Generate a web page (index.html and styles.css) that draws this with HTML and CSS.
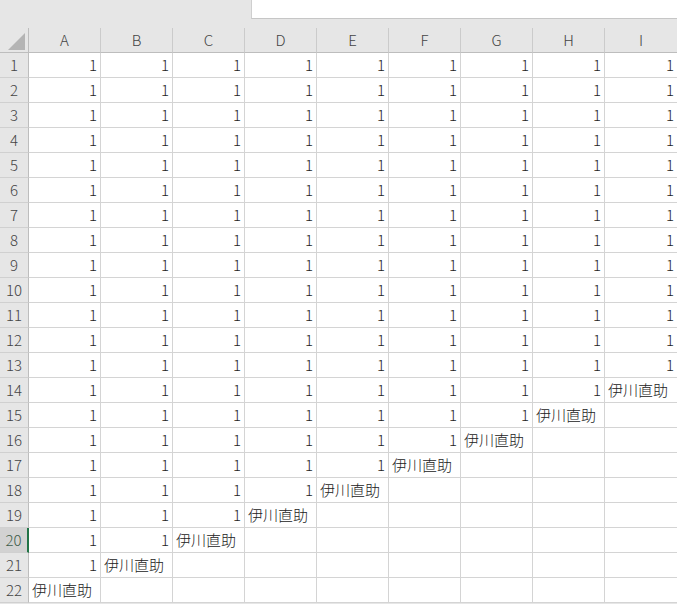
FILE: index.html
```html
<!DOCTYPE html>
<html lang="ja">
<head>
    <meta charset="UTF-8">
    <title>Sheet1</title>
    <link rel="stylesheet" href="styles.css">
</head>
<body>
    <div class="toolbar">
        <div class="formula-box"></div>
    </div>

    <div class="sheet" id="sheet">
        <div class="corner"><span class="corner-mark"></span></div>
        <div class="col-head">A</div>
        <div class="col-head">B</div>
        <div class="col-head">C</div>
        <div class="col-head">D</div>
        <div class="col-head">E</div>
        <div class="col-head">F</div>
        <div class="col-head">G</div>
        <div class="col-head">H</div>
        <div class="col-head">I</div>
    </div>

    <script>
        document.addEventListener('DOMContentLoaded', function() {
            const sheet = document.getElementById('sheet');
            const name = '伊川直助';

            for (let r = 1; r <= 22; r++) {
                const head = document.createElement('div');
                head.className = 'row-head' + (r === 20 ? ' active' : '');
                head.textContent = r;
                sheet.appendChild(head);

                // 1 が並んだあと、次の列に名前
                const ones = Math.min(9, 22 - r);
                for (let c = 0; c < 9; c++) {
                    const cell = document.createElement('div');
                    if (c < ones) {
                        cell.className = 'cell num';
                        cell.textContent = '1';
                    } else if (c === ones) {
                        cell.className = 'cell text';
                        cell.textContent = name;
                    } else {
                        cell.className = 'cell';
                    }
                    sheet.appendChild(cell);
                }
            }
        });
    </script>
</body>
</html>
```

FILE: styles.css
```css
body {
    margin: 0;
    padding: 0;
    background-color: #e6e6e6;
    font-family: "Noto Sans CJK JP", "Noto Sans", sans-serif;
    font-size: 15px;
    font-weight: 300;
    color: #222;
    overflow: hidden;
}
.toolbar {
    height: 28px;
    position: relative;
}
.formula-box {
    margin-left: 251px;
    height: 18px;
    background-color: white;
    border-left: 1px solid #cfcfcf;
    border-bottom: 1px solid #c6c6c6;
}
.sheet {
    display: grid;
    grid-template-columns: 29px repeat(8, 72px) 73px;
    grid-auto-rows: 25px;
    background-color: white;
}
.corner {
    position: relative;
    background-color: #e6e6e6;
    border-right: 1px solid #bdbdbd;
    border-bottom: 1px solid #bdbdbd;
}
.corner-mark {
    position: absolute;
    left: 8px;
    top: 5px;
    width: 0;
    height: 0;
    border-left: 17px solid transparent;
    border-bottom: 17px solid #b4b4b4;
}
.col-head {
    background-color: #e6e6e6;
    color: #444;
    text-align: center;
    line-height: 24px;
    border-right: 1px solid #cbcbcb;
    border-bottom: 1px solid #bdbdbd;
}
.row-head {
    background-color: #e6e6e6;
    color: #444;
    text-align: center;
    line-height: 24px;
    border-right: 1px solid #bdbdbd;
    border-bottom: 1px solid #d0d0d0;
}
.row-head.active {
    background-color: #d2d2d2;
    color: #3e5c4a;
    border-right: 2px solid #217346;
}
.cell {
    border-right: 1px solid #d4d4d4;
    border-bottom: 1px solid #d4d4d4;
    line-height: 24px;
    padding: 0 3px;
    white-space: nowrap;
}
.num {
    text-align: right;
}
.text {
    text-align: left;
}
```
